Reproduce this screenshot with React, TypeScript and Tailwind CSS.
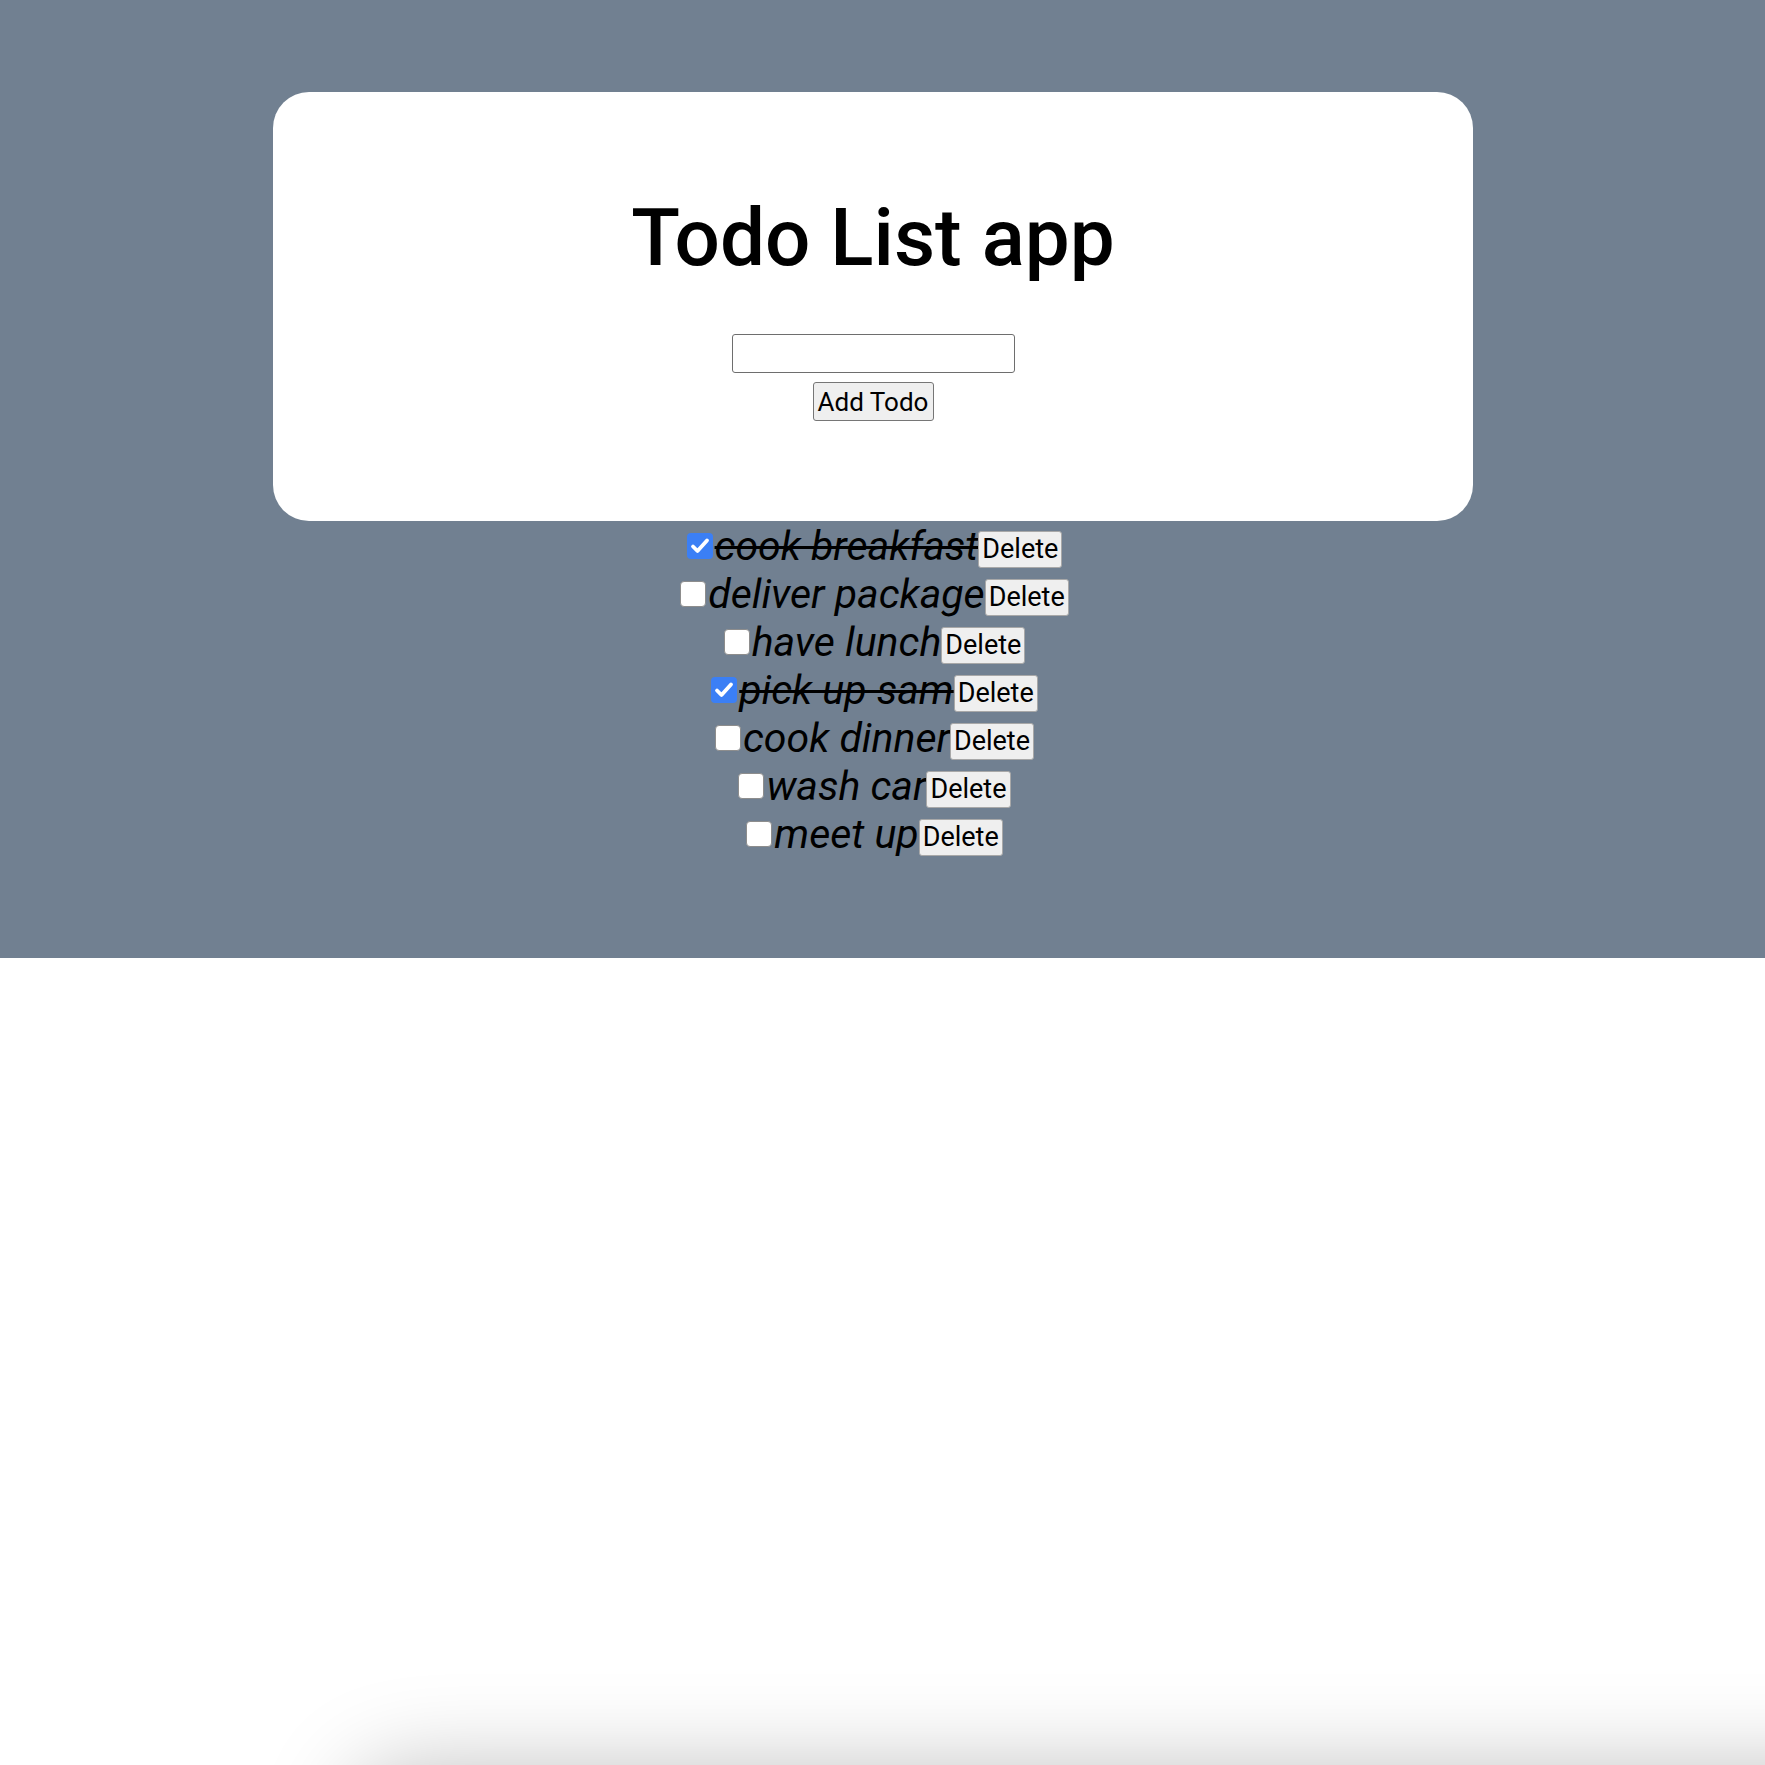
import React from "react";

const todos = [
  { text: "cook breakfast", done: true },
  { text: "deliver package", done: false },
  { text: "have lunch", done: false },
  { text: "pick up sam", done: true },
  { text: "cook dinner", done: false },
  { text: "wash car", done: false },
  { text: "meet up", done: false },
];

function Check({ done }: { done: boolean }) {
  if (done) {
    return (
      <span className="ml-[3px] mr-[2px] mb-[7px] flex h-[26px] w-[26px] shrink-0 items-center justify-center rounded-[4px] bg-[#3b7ff5]">
        <svg width="26" height="26" viewBox="0 0 26 26">
          <path d="M6 13.5 L10.5 18 L20 7.5" fill="none" stroke="#ffffff" strokeWidth="3.8" strokeLinecap="round" strokeLinejoin="round" />
        </svg>
      </span>
    );
  }
  return (
    <span className="ml-[3px] mr-[2px] mb-[7px] block h-[26px] w-[26px] shrink-0 rounded-[4px] border border-[#8d8d8d] bg-white" />
  );
}

export default function App() {
  return (
    <div className="relative h-[1765px] overflow-hidden bg-white" style={{ fontFamily: "Roboto, 'Liberation Sans', sans-serif" }}>
      <div className="h-[958px] bg-[#718091] pt-[92px]">
        <div className="ml-[273px] flex w-[1200px] flex-col items-center rounded-[36px] bg-white pt-[97px] pb-[100px]">
          <h1 className="text-[80px] font-medium leading-[98px] text-black">Todo List app</h1>
          <input className="mt-[47px] h-[39px] w-[283px] rounded-[3px] border border-[#6e6e6e] bg-white px-2 text-[24px] outline-none" />
          <button className="mt-[9px] h-[39px] w-[121px] rounded-[3px] border border-[#767676] bg-[#efefef] text-[26px] leading-none text-black">
            Add Todo
          </button>
        </div>
        <div className="ml-[273px] mt-[4px] flex w-[1200px] flex-col items-center">
          {todos.map((t, i) => (
            <div key={i} className="flex h-[48px] items-center">
              <Check done={t.done} />
              <span className={`mb-[5px] text-[41px] italic leading-none text-black ${t.done ? "line-through decoration-[3px]" : ""}`}>{t.text}</span>
              <button className="h-[37px] rounded-[3px] border border-[#a8a8a8] bg-[#efefef] px-[3px] text-[27px] leading-none text-black">
                Delete
              </button>
            </div>
          ))}
        </div>
      </div>
      <div className="absolute left-[350px] top-[1768px] h-[300px] w-[1600px] rounded-[60px] bg-white shadow-[0_0_90px_rgba(0,0,0,0.25)]" />
    </div>
  );
}
